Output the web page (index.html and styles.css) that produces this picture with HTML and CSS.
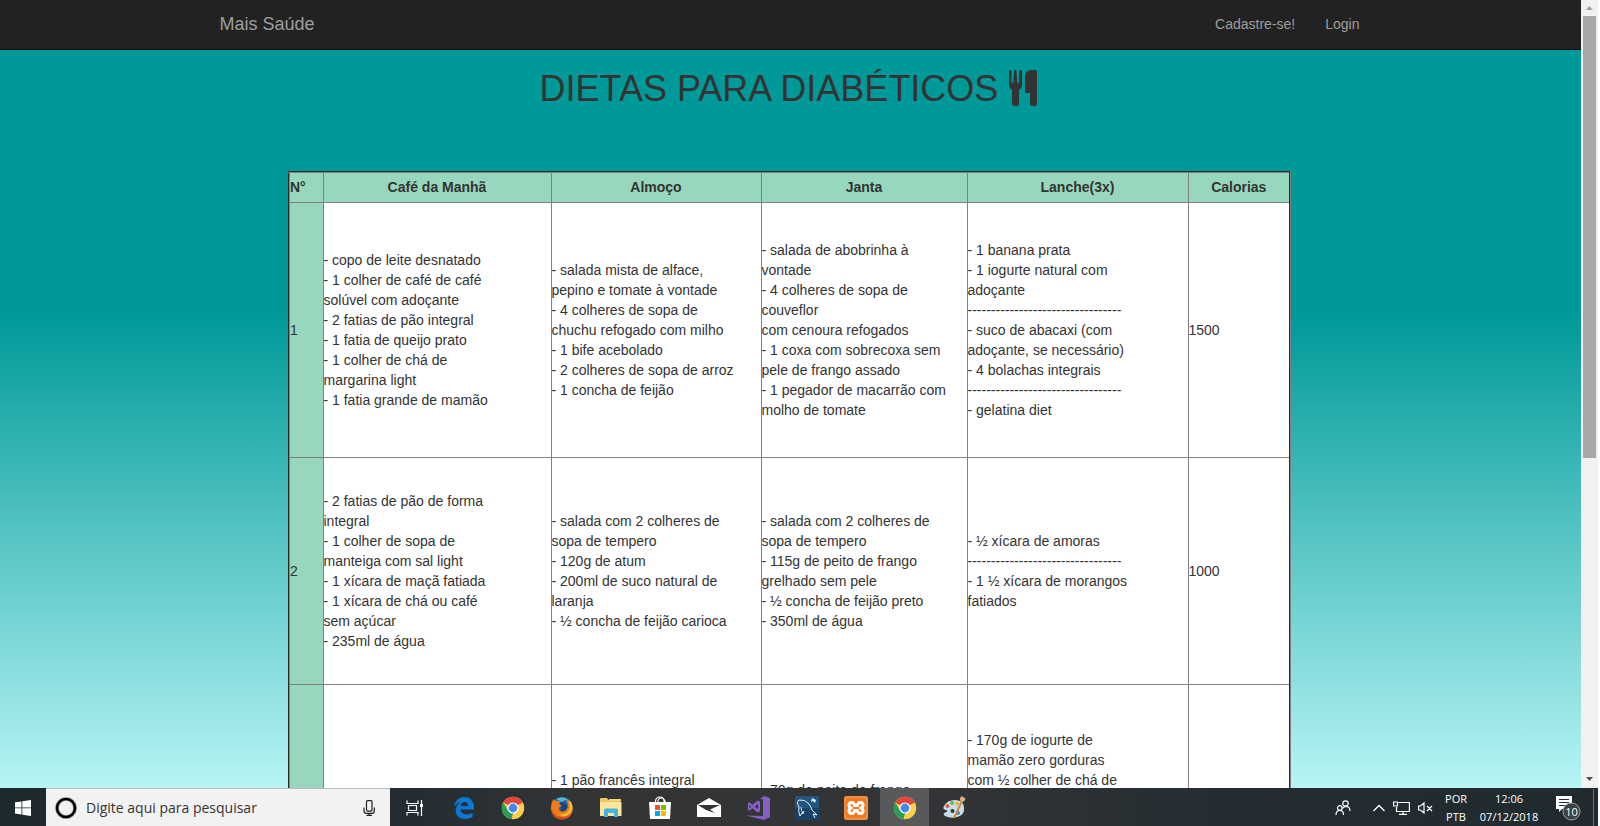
FILE: index.html
```html
<!DOCTYPE html>
<html lang="pt-BR">
<head>
<meta charset="utf-8">
<title>Mais Saúde</title>
<link rel="stylesheet" href="styles.css">
</head>
<body>
<div class="browser">
  <div class="page">
    <nav class="navbar">
      <div class="container">
        <a class="brand" href="#">Mais Saúde</a>
        <div class="links"><a href="#">Cadastre-se!</a><a href="#">Login</a></div>
      </div>
    </nav>
    <main>
      <h1>DIETAS PARA DIABÉTICOS
        <svg class="cutlery" viewBox="0 0 36 36" aria-hidden="true"><path d="M4 1Q4 0 5 0T6.500 1V12Q6.500 13 7.300 13T8.300 12L9 1Q9 0 10.200 0T11.500 1L12.200 12Q12.300 13 13.200 13T14 12V1Q14 0 15.200 0T17 1V15Q17 17 16 18L14 20V34Q14 36 12 36H9.500Q7 36 7 34V20L5 18Q4 17 4 15ZM32 1.500V34Q32 36 30 36H27.500Q25 36 25 34V23H21Q20 23 20 22V7Q20 0 27 0H31Q32 0 32 1.500Z"/></svg>
      </h1>
      <table class="diets">
        <colgroup><col class="c-num"><col class="c-cafe"><col class="c-almoco"><col class="c-janta"><col class="c-lanche"><col class="c-cal"></colgroup>
        <thead>
          <tr><th class="num">N°</th><th>Café da Manhã</th><th>Almoço</th><th>Janta</th><th>Lanche(3x)</th><th>Calorias</th></tr>
        </thead>
        <tbody>
          <tr class="r1">
            <td class="num">1</td>
            <td>- copo de leite desnatado<br>- 1 colher de café de café<br>solúvel com adoçante<br>- 2 fatias de pão integral<br>- 1 fatia de queijo prato<br>- 1 colher de chá de<br>margarina light<br>- 1 fatia grande de mamão</td>
            <td>- salada mista de alface,<br>pepino e tomate à vontade<br>- 4 colheres de sopa de<br>chuchu refogado com milho<br>- 1 bife acebolado<br>- 2 colheres de sopa de arroz<br>- 1 concha de feijão</td>
            <td>- salada de abobrinha à<br>vontade<br>- 4 colheres de sopa de<br>couveflor<br>com cenoura refogados<br>- 1 coxa com sobrecoxa sem<br>pele de frango assado<br>- 1 pegador de macarrão com<br>molho de tomate</td>
            <td>- 1 banana prata<br>- 1 iogurte natural com<br>adoçante<br>---------------------------------<br>- suco de abacaxi (com<br>adoçante, se necessário)<br>- 4 bolachas integrais<br>---------------------------------<br>- gelatina diet</td>
            <td>1500</td>
          </tr>
          <tr class="r2">
            <td class="num">2</td>
            <td>- 2 fatias de pão de forma<br>integral<br>- 1 colher de sopa de<br>manteiga com sal light<br>- 1 xícara de maçã fatiada<br>- 1 xícara de chá ou café<br>sem açúcar<br>- 235ml de água</td>
            <td>- salada com 2 colheres de<br>sopa de tempero<br>- 120g de atum<br>- 200ml de suco natural de<br>laranja<br>- ½ concha de feijão carioca</td>
            <td>- salada com 2 colheres de<br>sopa de tempero<br>- 115g de peito de frango<br>grelhado sem pele<br>- ½ concha de feijão preto<br>- 350ml de água</td>
            <td>- ½ xícara de amoras<br>---------------------------------<br>- 1 ½ xícara de morangos<br>fatiados</td>
            <td>1000</td>
          </tr>
          <tr class="r3">
            <td class="num"></td>
            <td></td>
            <td class="short">- 1 pão francês integral</td>
            <td class="shorter">- 70g de peito de frango</td>
            <td class="tall">- 170g de iogurte de<br>mamão zero gorduras<br>com ½ colher de chá de</td>
            <td></td>
          </tr>
        </tbody>
      </table>
    </main>
  </div>
  <div class="scrollbar" aria-hidden="true">
    <svg class="arrow" viewBox="0 0 17 16"><path d="M5 10h7L8.500 6z" fill="#a0a0a0"/></svg>
    <div class="track"><div class="thumb"></div></div>
    <svg class="arrow" viewBox="0 0 17 16"><path d="M5 5h7L8.500 9z" fill="#505050"/></svg>
  </div>
</div>

<footer class="taskbar">
  <button class="start" aria-label="Iniciar"><svg width="16" height="16" viewBox="0 0 16 16" fill="#fff"><path d="M0 2.300L6.500 1.400V7.500H0zM7.300 1.300L16 0V7.500H7.300zM0 8.300H6.500V14.500L0 13.600zM7.300 8.300H16V16L7.300 14.700z"/></svg></button>
  <label class="search">
    <svg width="22" height="22" viewBox="0 0 22 22"><circle cx="11" cy="11" r="9" fill="none" stroke="#aaa" stroke-width="4"/><circle cx="11" cy="11" r="9" fill="none" stroke="#000" stroke-width="2.600"/></svg>
    <input type="text" placeholder="Digite aqui para pesquisar" aria-label="Pesquisar">
    <svg width="12" height="16" viewBox="0 0 12 16" fill="none" stroke="#222" stroke-width="1.200"><rect x="3.500" y=".6" width="5.500" height="10.500" rx="1"/><path d="M1 7.500V11Q1 13.300 3.300 13.300H9Q11.300 13.300 11.300 11V7.500M6.200 13.300V16M3.500 15.400H9"/></svg>
  </label>
  <div class="apps">
    <button aria-label="Visão de tarefas"><svg width="18" height="16" viewBox="0 0 18 16" fill="none" stroke="#fff" stroke-width="1.200"><path d="M1 .5V3.500H12V.5M1 15.500V12.500H12V15.500M2.500 5.500H10.500V10.500H2.500ZM15.500 0V16"/><path d="M14 4H17V7H14z" fill="#fff" stroke="none"/></svg></button>
    <button aria-label="Edge"><svg width="22" height="22" viewBox="0 0 22 22"><path fill="#0b78d4" d="M1 10C1.800 4 6 0 11.500 0C17.500 0 21 4.500 21 10V12.500H7.500C7.800 16 11 17.600 14 17.500C16.300 17.400 18 16.800 19.600 15.800V20C17.500 21.300 15 22 12.500 22C6.500 22 2.700 18.500 2.700 13.500C2.700 9.500 5 6.600 8 5.300C4.800 5.500 2.500 7.500 1 10zM7.700 9H15C15 6.500 13.600 5 11.600 5C9.500 5 8 6.700 7.700 9z"/></svg></button>
    <button aria-label="Chrome"><svg width="24" height="24" viewBox="0 0 24 24"><circle cx="12" cy="12" r="11.200" fill="#fcd04b"/><path d="M12 12L2.300 6.400A11.200 11.200 0 0 1 21.700 6.400z" fill="#e2463a"/><path d="M2.300 6.400L7.200 14.800L12 12V17.300L10.500 23.100A11.200 11.200 0 0 1 2.300 6.400z" fill="#279d58"/><circle cx="12" cy="12" r="5.600" fill="#fff"/><circle cx="12" cy="12" r="4.400" fill="#4387f4"/></svg></button>
    <button aria-label="Firefox"><svg width="24" height="24" viewBox="0 0 24 24"><circle cx="12" cy="12" r="10.800" fill="#2369a8"/><path d="M6 3Q13-1 19 4Q15 3 12 6z" fill="#4fb6dc"/><path d="M12 6Q18 8 18 12T12 17Q8 17 7 14Q9 15 12 13L9 11V8z" fill="#17447e"/><path d="M2 6L3.500 3L5.500 5Q8 4 10 6L9 8L12 10L9 11.500Q8 15 12 15.500Q17 15.500 18 10Q18 6 16 3.500Q22 6 23 12Q22.500 22 13 23.500Q2 23 1 13Q.8 9 2 6z" fill="#ef7d1b"/><path d="M18 4Q21 9 19 14Q16 20 9 18Q15 23 20 17Q24 12 21 6z" fill="#fcc535"/><path d="M1 11Q3 20 11 21Q17 22 21 17Q18 24 11 23.300Q2 22 1 11z" fill="#d94b1b"/></svg></button>
    <button aria-label="Explorador de arquivos"><svg width="24" height="22" viewBox="0 0 24 22"><path d="M1 2Q1 1 2 1H8L9.500 3H21.500V19H1z" fill="#efc75e"/><path d="M10 2H22V4H10z" fill="#f5d67f"/><path d="M1 5H22.500V19H1z" fill="#fde59b"/><path d="M5 20V13Q5 11.500 6.500 11.500H17.500Q19 11.500 19 13V20H15V16H9V20z" fill="#45b3dc"/></svg></button>
    <button aria-label="Loja"><svg width="24" height="24" viewBox="0 0 24 24"><path d="M1 6H23L22 23H2z" fill="#fff"/><path d="M7.500 8V5Q8 1 12 1T16 5V8M10 6Q10 2 13 2T17.500 6" fill="none" stroke="#fff" stroke-width="1.200"/><path d="M7 9h5v5H7z" fill="#f25022"/><path d="M13 9h5v5H13z" fill="#7fba00"/><path d="M7 15h5v5H7z" fill="#00a4ef"/><path d="M13 15h5v5H13z" fill="#ffb900"/></svg></button>
    <button aria-label="Email"><svg width="26" height="20" viewBox="0 0 26 20"><path d="M1 7L13 0L25 7V19H1z" fill="#fff"/><path d="M2 7H24L14 11.500L19 15L10 12z" fill="#323335"/></svg></button>
    <button aria-label="Visual Studio"><svg width="24" height="24" viewBox="0 0 24 24"><path d="M18 0L24 2V21L18 24L0 19.500L17 20V3.500L14 3z" fill="#865fc5"/><path fill-rule="evenodd" d="M11.500 4.500L14 5.500V15.500L11.500 16.500L6.500 12.200L3.500 14.700L2 14V7L3.500 6.300L6.500 8.800zM12 8L8.700 10.500L12 13zM3.500 8.700V12.300L5.200 10.500z" fill="#865fc5"/></svg></button>
    <button aria-label="MySQL Workbench"><svg width="24" height="24" viewBox="0 0 24 24"><rect width="24" height="24" rx="2" fill="#22567f"/><path d="M0 12H24V22Q24 24 22 24H2Q0 24 0 22z" fill="#184366"/><path d="M7 17L5 20Q3 15 4 11Q1 6 4 4Q10 3 14 8Q16 11 17 14L22 19L18 18L20 22M6 11Q6 14 8 18L9 15" fill="none" stroke="#e4eef4" stroke-width="1"/><path d="M17 2L21 4L20 7L18 5L16 6z" fill="#d8e9f2"/></svg></button>
    <button aria-label="XAMPP"><svg width="24" height="24" viewBox="0 0 24 24"><rect width="24" height="24" rx="2" fill="#f17a25"/><rect x="1" y="1" width="22" height="22" rx="2" fill="none" stroke="#f9a15e"/><path d="M8 6.500Q5 6.500 5 9Q5 11.500 7.500 12Q5 12.500 5 15Q5 17.500 8 17.500Q10 17.500 10.500 14.500H13.500Q14 17.500 16 17.500Q19 17.500 19 15Q19 12.500 16.500 12Q19 11.500 19 9Q19 6.500 16 6.500Q14 6.500 13.500 9.500H10.500Q10 6.500 8 6.500z" fill="none" stroke="#fff" stroke-width="3" stroke-linejoin="round"/></svg></button>
    <button class="active" aria-label="Chrome, aberto"><svg width="24" height="24" viewBox="0 0 24 24"><circle cx="12" cy="12" r="11.200" fill="#fcd04b"/><path d="M12 12L2.300 6.400A11.200 11.200 0 0 1 21.700 6.400z" fill="#e2463a"/><path d="M2.300 6.400L7.200 14.800L12 12V17.300L10.500 23.100A11.200 11.200 0 0 1 2.300 6.400z" fill="#279d58"/><circle cx="12" cy="12" r="5.600" fill="#fff"/><circle cx="12" cy="12" r="4.400" fill="#4387f4"/></svg></button>
    <button aria-label="Paint"><svg width="24" height="24" viewBox="0 0 24 24"><path d="M2 10Q5 4 13 4Q21 4 22 11Q23 19 15 21Q9 23 3 20Q0 18 4 16Q7 15 4 14Q0 13 2 10z" fill="#c7dfec"/><circle cx="5.500" cy="10" r="2" fill="#e55a3b"/><circle cx="10" cy="7" r="2" fill="#68b848"/><circle cx="15" cy="7.500" r="2" fill="#f0b429"/><circle cx="10.500" cy="15" r="2" fill="#273a4a"/><circle cx="16" cy="17" r="2" fill="#3989c9"/><path d="M12 22L20 5" stroke="#d68a35" stroke-width="2"/><path d="M18.500 5Q17 2 20 0Q21 2 23.500 2Q23 5 20.500 6z" fill="#dcb47c"/></svg></button>
  </div>
  <div class="tray">
    <svg class="people" width="16" height="16" viewBox="0 0 16 16" fill="none" stroke="#fff" stroke-width="1.200"><circle cx="4.800" cy="8" r="2.300"/><path d="M1 15Q1 10.500 4.800 10.500T8.500 15"/><circle cx="10.500" cy="3.500" r="2.700"/><path d="M7.500 8.500Q9 6.300 11 6.300Q15 6.500 15 11"/></svg>
    <svg class="chevron" width="12" height="8" viewBox="0 0 12 8" fill="none" stroke="#fff" stroke-width="1.300"><path d="M.5 7L6 1.500L11.500 7"/></svg>
    <svg width="17" height="14" viewBox="0 0 17 14" fill="none" stroke="#fff" stroke-width="1.200"><path d="M5.500 1.500H16.400V10.500H3.500V6M10 10.500V13.400M6 13.400H14M.6 1H4.500V5H.6z"/></svg>
    <svg width="15" height="12" viewBox="0 0 15 12" fill="none" stroke="#fff" stroke-width="1.200"><path d="M.6 4V8H2.500L6 11V1L2.500 4zM9 4L14 9M14 4L9 9"/></svg>
    <div class="lang">POR<br>PTB</div>
    <div class="clock">12:06<br>07/12/2018</div>
    <svg class="notes" width="26" height="26" viewBox="0 0 26 26"><path d="M1 1H17V14H7L4 17V14H1z" fill="#fff"/><path d="M4 4.500H14M4 7.500H14M4 10.500H11" stroke="#222b30" stroke-width="1.200"/><circle cx="16.500" cy="16.500" r="8.500" fill="#3b4145" stroke="#a2a5a7"/><text x="16.500" y="20.500" text-anchor="middle">10</text></svg>
    <div class="peek"></div>
  </div>
</footer>
</body>
</html>
```
FILE: styles.css
```css
* { box-sizing: border-box; }
body {
  margin: 0;
  height: 100vh;
  padding-right: 2px;
  display: flex;
  flex-direction: column;
  overflow: hidden;
  background: #fff;
  font: 14px/20px "Liberation Sans", Arial, sans-serif;
  color: #333;
}
a { text-decoration: none; color: #9d9d9d; }
button { border: 0; padding: 0; background: none; display: flex; align-items: center; justify-content: center; }

.browser { flex: 1; min-height: 0; display: flex; }
.page {
  flex: 1;
  overflow: hidden;
  background: linear-gradient(#099 0%, #099 40%, #b8f5f5 100%);
}
.navbar { background: #222; border-bottom: 1px solid #080808; padding-right: 2px; }
.container {
  max-width: 1170px;
  margin: 0 auto;
  padding: 14px 15px 15px;
  display: flex;
  justify-content: space-between;
  align-items: center;
}
.brand { font-size: 18px; }
.links { display: flex; gap: 30px; }

main { padding-right: 2px; }
h1 {
  margin: 19px 0 62px;
  padding-left: 2px;
  font-size: 36px;
  line-height: 40px;
  font-weight: 400;
  text-align: center;
}
.cutlery { width: 36px; height: 36px; fill: #333; vertical-align: -5px; margin-left: -3px; }

.diets {
  width: 1003px;
  max-width: 100%;
  margin: 0 auto;
  table-layout: fixed;
  border-collapse: collapse;
  background: #fff;
  border: 2px groove #808080;
}
.c-num { width: 34px; }
.c-cafe { width: 228px; }
.c-almoco { width: 210px; }
.c-janta { width: 206px; }
.c-lanche { width: 221px; }
.diets th, .diets td { border: 1px solid #808080; padding: 0; }
.diets th { background: #96d7bd; height: 30px; text-align: center; }
.diets td { text-align: left; vertical-align: middle; }
.diets th.num { text-align: left; }
.diets td.num { background: #96d7bd; }
.r1 { height: 255px; }
.r2 { height: 227px; }
.r3 { height: 280px; }
.diets .r3 td { vertical-align: top; }
.diets .r3 .tall { padding-top: 45px; }
.diets .r3 .short { padding-top: 85px; }
.diets .r3 .shorter { padding-top: 95px; }

.scrollbar { width: 17px; background: #f1f1f1; display: flex; flex-direction: column; }
.arrow { width: 17px; height: 16px; }
.track { flex: 1; padding: 0 2px; }
.thumb { height: 58.4%; background: #a8a8a8; }

.taskbar {
  height: 38px;
  padding-top: 1px;
  display: flex;
  background: linear-gradient(90deg, #1e292e 0%, #222c31 25%, #323436 36%, #333436 58%, #222c31 78%, #212a2f 100%);
  font-family: "Open Sans", "Noto Sans", sans-serif;
  color: #fff;
}
.start { width: 46px; }
.search {
  width: 344px;
  display: flex;
  align-items: center;
  margin-top: -1px;
  padding: 1px 15px 0 9px;
  background: #f2f2f2;
  border-top: 1px solid #bbb;
}
.search input {
  flex: 1;
  min-width: 0;
  border: 0;
  padding: 0 0 0 9px;
  background: none;
  font: 14px/20px "Open Sans", "Noto Sans", sans-serif;
}
.search input::placeholder { color: #333; opacity: 1; }
.apps { display: flex; flex: 1; }
.apps button { width: 49px; }
.apps .active { background: #57595a; margin-top: -1px; padding-top: 1px; }
.tray { display: flex; align-items: center; gap: 8px; font-size: 11px; line-height: 18px; text-align: center; }
.people { margin-right: 14px; }
.lang { width: 26px; margin-left: 2px; }
.clock { width: 64px; }
.notes { margin-left: 6px; }
.notes text { font: 11px "Open Sans", sans-serif; fill: #fff; }
.peek { width: 5px; height: 38px; border-left: 1px solid #6b7276; margin-left: 4px; }
```
